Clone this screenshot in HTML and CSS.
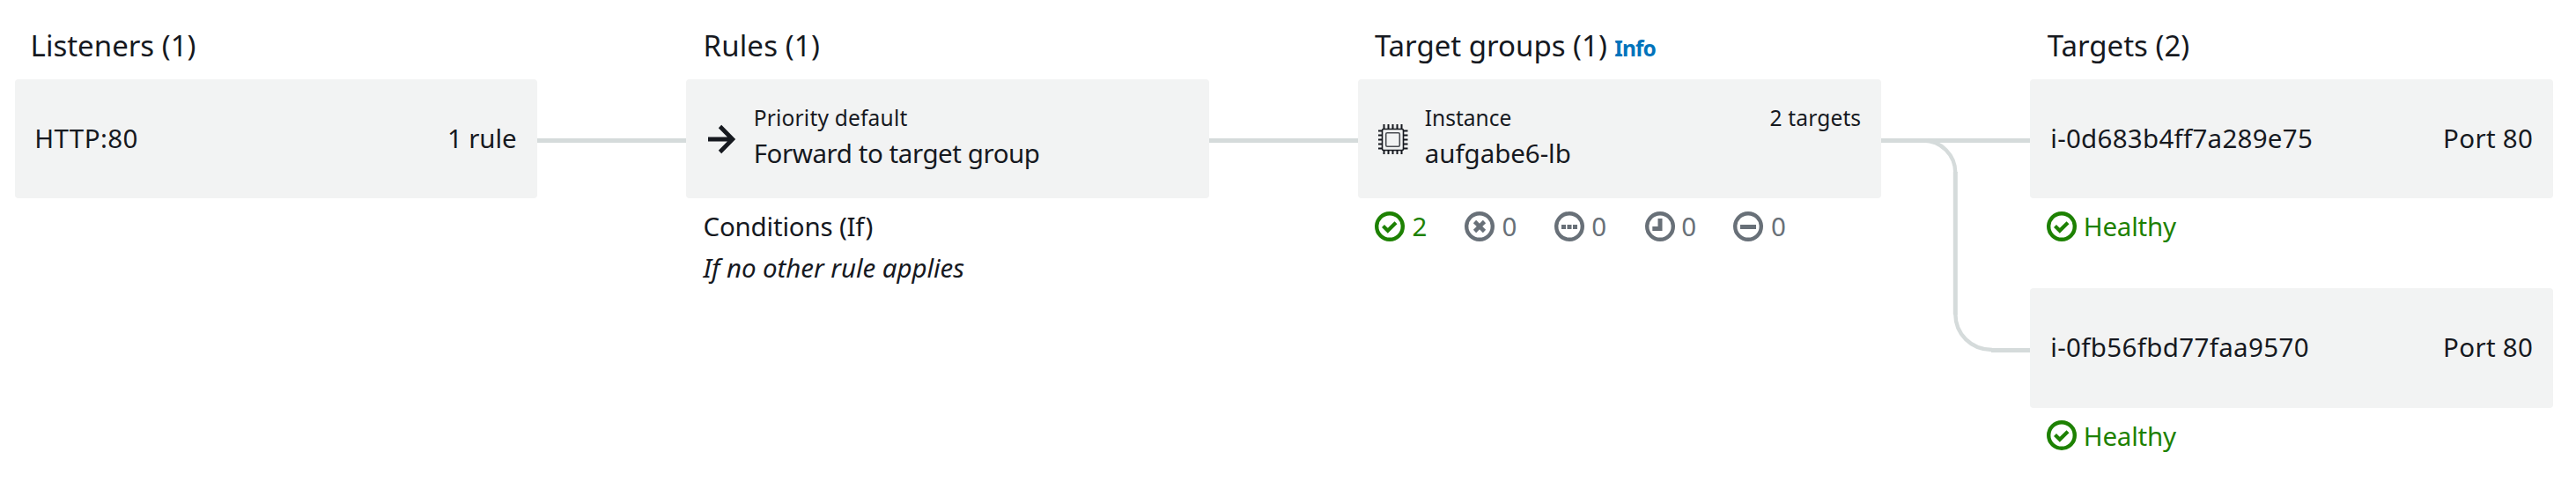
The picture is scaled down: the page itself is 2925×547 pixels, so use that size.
FILE: index.html
```html
<!DOCTYPE html>
<html lang="en">
<head>
<meta charset="utf-8">
<title>Resource map</title>
<link rel="stylesheet" href="styles.css">
</head>
<body>
<svg class="defs" width="0" height="0">
  <symbol id="ok" viewBox="0 0 34 34"><circle cx="17" cy="17" r="14.8" fill="none" stroke="currentColor" stroke-width="4.4"/><path d="M9.500 16.500l5.300 5.200 9.200-9" fill="none" stroke="currentColor" stroke-width="4.200"/></symbol>
  <symbol id="bad" viewBox="0 0 34 34"><circle cx="17" cy="17" r="14.8" fill="none" stroke="currentColor" stroke-width="4.4"/><path d="M11.500 11.500l11 11M22.500 11.500l-11 11" fill="none" stroke="currentColor" stroke-width="4.600"/></symbol>
  <symbol id="unused" viewBox="0 0 34 34"><circle cx="17" cy="17" r="14.8" fill="none" stroke="currentColor" stroke-width="4.4"/><path d="M8 15h5v5H8zM14.500 15h5v5h-5zM21 15h5v5h-5z" fill="currentColor"/></symbol>
  <symbol id="initial" viewBox="0 0 34 34"><circle cx="17" cy="17" r="14.8" fill="none" stroke="currentColor" stroke-width="4.4"/><path d="M14.500 8h5v14H8.300v-5h6.200z" fill="currentColor"/></symbol>
  <symbol id="draining" viewBox="0 0 34 34"><circle cx="17" cy="17" r="14.8" fill="none" stroke="currentColor" stroke-width="4.4"/><path d="M8 15h18v5H8z" fill="currentColor"/></symbol>
</svg>
<main class="map">
  <section class="column listeners">
    <h2 class="heading">Listeners (1)</h2>
    <div class="card"><span class="name protocol">HTTP:80</span><span class="name end">1 rule</span></div>
  </section>

  <svg class="link" viewBox="0 0 169 311"><path d="M0 69.500H169"/></svg>

  <section class="column rules">
    <h2 class="heading">Rules (1)</h2>
    <div class="card">
      <svg class="icon arrow" viewBox="0 0 34 34"><path d="M2 17H30M15.500 2.500L29.800 17 15.500 31.500"/></svg>
      <div class="lines"><span class="small priority">Priority default</span><span class="action">Forward to target group</span></div>
    </div>
    <div class="notes"><span class="conditions">Conditions (If)</span><em class="condition">If no other rule applies</em></div>
  </section>

  <svg class="link" viewBox="0 0 169 311"><path d="M0 69.500H169"/></svg>

  <section class="column groups">
    <h2 class="heading">Target groups (1)<a class="info">Info</a></h2>
    <div class="card">
      <svg class="icon chip" viewBox="0 0 34 34">
        <path class="pins" d="M6.500 0v5M11.500 0v5M16.500 0v5M21.500 0v5M26.500 0v5M6.500 29v5M11.500 29v5M16.500 29v5M21.500 29v5M26.500 29v5M0 7.500h4.500M0 12.500h4.500M0 17.500h4.500M0 22.500h4.500M0 27.500h4.500M28.500 7.500h5M28.500 12.500h5M28.500 17.500h5M28.500 22.500h5M28.500 27.500h5"/>
        <rect class="body" x="4.500" y="5.500" width="24" height="24" rx="1.500"/>
        <rect class="core" x="8.700" y="9.700" width="15.600" height="15.600" rx="1.500"/>
      </svg>
      <div class="lines"><span class="small">Instance</span><span class="group">aufgabe6-lb</span></div>
      <span class="small count">2 targets</span>
    </div>
    <div class="statuses">
      <span class="status healthy"><svg class="badge"><use href="#ok"/></svg>2</span>
      <span class="status"><svg class="badge"><use href="#bad"/></svg>0</span>
      <span class="status"><svg class="badge"><use href="#unused"/></svg>0</span>
      <span class="status"><svg class="badge clock"><use href="#initial"/></svg>0</span>
      <span class="status"><svg class="badge"><use href="#draining"/></svg>0</span>
    </div>
  </section>

  <svg class="link branch" viewBox="0 0 169 311"><path d="M0 69.500H169M84.300 105V267M125 307.500H169"/><path class="bend" d="M48 69.500C68 69.500 84.300 86 84.300 106M84.300 266C84.300 289 102 307 126 307"/></svg>

  <section class="column targets">
    <h2 class="heading">Targets (2)</h2>
    <div class="card"><span class="name first">i-0d683b4ff7a289e75</span><span class="name end port">Port 80</span></div>
    <div class="statuses"><span class="status healthy word"><svg class="badge"><use href="#ok"/></svg>Healthy</span></div>
    <div class="card next"><span class="name second">i-0fb56fbd77faa9570</span><span class="name end port">Port 80</span></div>
    <div class="statuses"><span class="status healthy word"><svg class="badge"><use href="#ok"/></svg>Healthy</span></div>
  </section>
</main>
</body>
</html>
```
FILE: styles.css
```css
body {
  margin: 0;
  background: #fff;
  color: #16191f;
  font-family: "Noto Sans", sans-serif;
  font-size: 29.5px;
  white-space: nowrap;
}

.defs { position: absolute; }

.map {
  display: flex;
  align-items: flex-start;
  padding: 32px 0 0 16.6px;
}

.column { width: 593.9px; flex: none; }

.heading {
  display: flex;
  align-items: baseline;
  height: 40px;
  margin: 0 0 18px;
  padding-left: 18.5px;
  font-size: 33px;
  font-weight: 400;
  line-height: 40px;
}
.listeners .heading { padding-left: 18px; }
.rules .heading { padding-left: 19px; letter-spacing: .15px; }
.targets .heading { padding-left: 19.5px; }

.info {
  margin-left: 8.5px;
  color: #0073bb;
  font-size: 24.5px;
  font-weight: 700;
  letter-spacing: -.9px;
}

.card {
  box-sizing: border-box;
  display: flex;
  align-items: center;
  height: 135.3px;
  padding: 0 23px;
  border-radius: 4px;
  background: #f2f3f3;
}
.listeners .card { padding: 0 24px 0 22.6px; }
.next { margin-top: 47px; }

.name { padding-bottom: 1.4px; line-height: 44px; }
.protocol { letter-spacing: .4px; }
.end { margin-left: auto; letter-spacing: -.1px; }
.port { letter-spacing: .3px; }
.first { letter-spacing: .28px; }
.second { letter-spacing: .35px; }

.icon { flex: none; width: 34px; height: 34px; fill: none; stroke: #16191f; }
.arrow { margin-right: 19.2px; stroke-width: 4.8px; }
.chip { margin-right: 18.4px; }
.pins { stroke-width: 2px; }
.body { stroke-width: 1.6px; }
.core { stroke: #4a4d52; stroke-width: 1.6px; }

.lines {
  display: flex;
  flex-direction: column;
  padding-bottom: 3.6px;
  line-height: 44px;
}
.small { font-size: 24.5px; line-height: 36px; }
.priority { letter-spacing: .2px; }
.action { letter-spacing: -.43px; }
.group { letter-spacing: -.05px; }
.count {
  align-self: flex-start;
  margin: 25.8px 0 0 auto;
  letter-spacing: .15px;
}

.notes {
  display: flex;
  flex-direction: column;
  margin-top: 8px;
  padding-left: 19px;
  line-height: 47px;
}
.conditions { letter-spacing: -.2px; }
.condition { letter-spacing: -.07px; }

.statuses {
  display: flex;
  gap: 42.4px;
  margin-top: 8px;
  padding-left: 18.6px;
  line-height: 47px;
}
.status { display: flex; align-items: center; gap: 8.6px; color: #687078; }
.healthy { color: #1d8102; }
.word { gap: 8px; letter-spacing: -.25px; }
.badge { width: 34px; height: 34px; }
.clock { margin: 0 -1px 0 1px; }

.link {
  flex: none;
  width: 169px;
  height: 311px;
  margin-top: 58px;
  fill: none;
  stroke: #d5dbdb;
  stroke-width: 5px;
}
.bend { stroke-width: 4.4px; }
```
